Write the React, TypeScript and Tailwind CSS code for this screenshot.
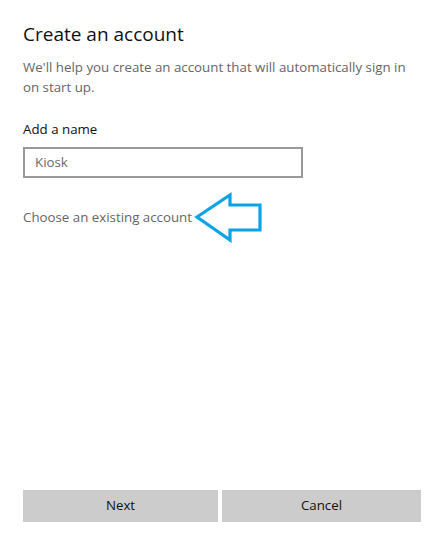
export default function App() {
  return (
    <div
      className="w-[444px] h-[544px] bg-white flex flex-col px-[23px] pt-[20px] pb-[22px]"
      style={{ fontFamily: '"Open Sans", "Noto Sans", sans-serif' }}
    >
      <h1 className="text-[19px] leading-[28px] text-[#111]">Create an account</h1>
      <p className="mt-[9px] text-[13.3px] leading-[20px] text-[#666] pr-[10px]">
        We'll help you create an account that will automatically sign in on start up.
      </p>

      <label className="mt-[22px] text-[13.3px] leading-[20px] text-[#111]">Add a name</label>
      <div className="mt-[8px] w-[280px] h-[31px] border-2 border-[#999] flex items-center px-[10px]">
        <span className="text-[13.3px] text-[#6b6b6b]">Kiosk</span>
      </div>

      <div className="mt-[29px] flex items-center h-[20px]">
        <span className="text-[13.3px] leading-[20px] text-[#666]">Choose an existing account</span>
        <svg width="74" height="52" viewBox="0 0 74 52" className="-ml-[1px] shrink-0">
          <polygon
            points="6,26 39,4 39,14 69,14 69,39 39,39 39,49"
            fill="none"
            stroke="#0aa3e6"
            strokeWidth="3.2"
            strokeLinejoin="miter"
          />
        </svg>
      </div>

      <div className="mt-auto flex gap-[4px]">
        <button className="w-[195px] h-[32px] bg-[#cccccc] text-[13.3px] text-[#111]">Next</button>
        <button className="w-[199px] h-[32px] bg-[#cccccc] text-[13.3px] text-[#111]">Cancel</button>
      </div>
    </div>
  );
}
